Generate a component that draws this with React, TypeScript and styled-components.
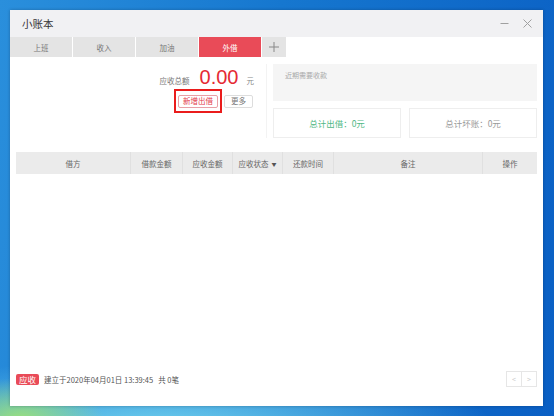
import React from 'react';
import styled, {createGlobalStyle} from 'styled-components';

const GlobalStyle = createGlobalStyle`
    html, body {
        margin: 0;
        padding: 0;
    }
    body {
        font-family: "Microsoft YaHei", "Noto Sans CJK SC", "Noto Sans", sans-serif;
        font-size: 8px;
        color: #555;
    }
`;

const Desktop = styled.div`
    width: 554px;
    height: 416px;
    box-sizing: border-box;
    padding: 10px 11px 10px 10px;
    background:
        radial-gradient(ellipse 120px 60px at 20px 420px, #9be07a 0%, rgba(155, 224, 122, 0) 70%),
        radial-gradient(ellipse 420px 90px at 160px 430px, #74d4ef 0%, rgba(116, 212, 239, 0) 80%),
        linear-gradient(100deg, #2a8fdc 0%, #1677cf 45%, #0a5fc4 100%);
    display: flex;
`;

const Window = styled.div`
    flex: 1;
    background: #fff;
    display: flex;
    flex-direction: column;
    box-shadow: 0 0 3px rgba(0, 0, 0, 0.25);
`;

const TitleBar = styled.div`
    height: 27px;
    background: #f1f1f3;
    display: flex;
    align-items: center;
    padding: 0 4px 0 12px;
`;

const Title = styled.div`
    flex: 1;
    font-size: 10.5px;
    color: #333;
`;

const WinButton = styled.div`
    width: 23px;
    display: flex;
    justify-content: center;
    align-items: center;
`;

const TabRow = styled.div`
    display: flex;
    gap: 1px;
    height: 20px;
    background: #fff;
`;

const Tab = styled.div<{$active?: boolean}>`
    width: 62px;
    display: flex;
    align-items: center;
    justify-content: center;
    background: ${p => (p.$active ? '#e94b58' : '#e4e4e4')};
    color: ${p => (p.$active ? '#fff' : '#777')};
    font-size: 7.5px;
`;

const AddTab = styled(Tab)`
    width: 24px;
`;

const Summary = styled.div`
    display: flex;
    padding: 7px 6px 0 6px;
    height: 81px;
    box-sizing: border-box;
`;

const LeftPanel = styled.div`
    width: 251px;
    display: flex;
    flex-direction: column;
    align-items: flex-end;
    padding-right: 12px;
    box-sizing: border-box;
    border-right: 1px solid #f3f3f3;
    margin-right: 6px;
`;

const TotalLine = styled.div`
    display: flex;
    align-items: baseline;
    margin-top: 2px;
    height: 23px;
`;

const TotalLabel = styled.span`
    color: #777;
    font-size: 7.5px;
    margin-right: 10px;
`;

const TotalValue = styled.span`
    color: #e52a33;
    font-family: "Liberation Sans", Arial, sans-serif;
    font-size: 20px;
    margin-right: 8px;
`;

const Unit = styled.span`
    color: #888;
    font-size: 7.5px;
`;

const Buttons = styled.div`
    display: flex;
    align-items: center;
    gap: 2px;
    margin-right: 1px;
`;

const Highlight = styled.div`
    border: 2px solid #ea1c1c;
    padding: 3.5px 2px;
    display: flex;
`;

const SmallButton = styled.div<{$primary?: boolean}>`
    height: 13px;
    box-sizing: border-box;
    padding: 0 ${p => (p.$primary ? 4 : 6)}px;
    display: flex;
    align-items: center;
    border: 1px solid ${p => (p.$primary ? '#e9a0a6' : '#ddd')};
    border-radius: 2px;
    color: ${p => (p.$primary ? '#e2394a' : '#777')};
    font-size: 7.5px;
    line-height: 1;
`;

const RightPanel = styled.div`
    flex: 1;
    display: flex;
    flex-direction: column;
    gap: 7px;
`;

const Upcoming = styled.div`
    height: 37px;
    background: #f5f5f5;
    padding: 6px 12px;
    box-sizing: border-box;
    color: #aaa;
    font-size: 7px;
`;

const StatRow = styled.div`
    display: flex;
    gap: 8px;
`;

const StatBox = styled.div<{$color: string}>`
    flex: 1;
    height: 28px;
    border: 1px solid #eee;
    display: flex;
    align-items: center;
    justify-content: center;
    color: ${p => p.$color};
    font-size: 8.5px;
`;

const Table = styled.div`
    margin: 14px 6px 0 6px;
    flex: 1;
`;

const HeaderRow = styled.div`
    display: grid;
    grid-template-columns: 114px 52px 50px 50px 51px 149px 1fr;
    height: 22px;
    background: #ebebeb;
`;

const HeaderCell = styled.div`
    display: flex;
    align-items: center;
    justify-content: center;
    border-left: 1px solid #e0e0e0;
    color: #666;
    font-size: 7.5px;
    gap: 3px;
    &:first-child {
        border-left: none;
    }
`;

const Caret = styled.span`
    font-size: 5px;
    color: #555;
`;

const Footer = styled.div`
    display: flex;
    align-items: center;
    padding: 0 6px 19px 6px;
`;

const Badge = styled.span`
    background: #e94b58;
    color: #fff;
    font-size: 8.5px;
    padding: 0 3px;
    height: 11px;
    line-height: 11px;
    border-radius: 2px;
`;

const Info = styled.span`
    margin-left: 5px;
    color: #555;
    font-size: 7.5px;
    white-space: pre;
`;

const Spacer = styled.div`
    flex: 1;
`;

const Pager = styled.div`
    display: flex;
    border: 1px solid #e6e6e6;
    height: 14px;
`;

const PageButton = styled.div`
    width: 14px;
    display: flex;
    align-items: center;
    justify-content: center;
    color: #ccc;
    font-size: 7px;
    & + & {
        border-left: 1px solid #e6e6e6;
    }
`;

const columns = ['借方', '借款金额', '应收金额', '应收状态', '还款时间', '备注', '操作'];

export default function App() {
    return (
        <>
            <GlobalStyle />
            <Desktop>
                <Window>
                    <TitleBar>
                        <Title>小账本</Title>
                        <WinButton>
                            <svg width="9" height="9" viewBox="0 0 9 9">
                                <path d="M0.5 4.5h8" stroke="#a0a0a0" strokeWidth="1" />
                            </svg>
                        </WinButton>
                        <WinButton>
                            <svg width="9" height="9" viewBox="0 0 9 9">
                                <path d="M0.5 0.5l8 8M8.5 0.5l-8 8" stroke="#a0a0a0" strokeWidth="1" />
                            </svg>
                        </WinButton>
                    </TitleBar>
                    <TabRow>
                        <Tab>上班</Tab>
                        <Tab>收入</Tab>
                        <Tab>加油</Tab>
                        <Tab $active>外借</Tab>
                        <AddTab>
                            <svg width="10" height="10" viewBox="0 0 10 10">
                                <path d="M5 0v10M0 5h10" stroke="#888" strokeWidth="1" />
                            </svg>
                        </AddTab>
                    </TabRow>
                    <Summary>
                        <LeftPanel>
                            <TotalLine>
                                <TotalLabel>应收总额</TotalLabel>
                                <TotalValue>0.00</TotalValue>
                                <Unit>元</Unit>
                            </TotalLine>
                            <Buttons>
                                <Highlight>
                                    <SmallButton $primary>新增出借</SmallButton>
                                </Highlight>
                                <SmallButton>更多</SmallButton>
                            </Buttons>
                        </LeftPanel>
                        <RightPanel>
                            <Upcoming>近期需要收款</Upcoming>
                            <StatRow>
                                <StatBox $color="#4fb784">总计出借：0元</StatBox>
                                <StatBox $color="#999">总计坏账：0元</StatBox>
                            </StatRow>
                        </RightPanel>
                    </Summary>
                    <Table>
                        <HeaderRow>
                            {columns.map(c => (
                                <HeaderCell key={c}>
                                    {c}
                                    {c === '应收状态' && <Caret>▼</Caret>}
                                </HeaderCell>
                            ))}
                        </HeaderRow>
                    </Table>
                    <Footer>
                        <Badge>应收</Badge>
                        <Info>建立于2020年04月01日 13:39:45   共 0笔</Info>
                        <Spacer />
                        <Pager>
                            <PageButton>&lt;</PageButton>
                            <PageButton>&gt;</PageButton>
                        </Pager>
                    </Footer>
                </Window>
            </Desktop>
        </>
    );
}
